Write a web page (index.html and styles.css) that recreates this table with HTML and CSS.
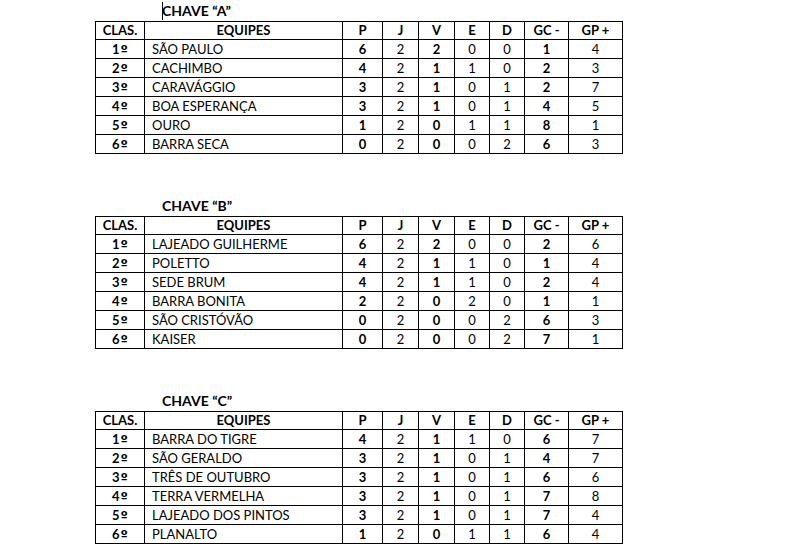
FILE: index.html
```html
<!DOCTYPE html>
<html lang="pt">
<head>
<meta charset="utf-8">
<title>Chaves</title>
<link rel="stylesheet" href="styles.css">
</head>
<body>
<main class="page">
  <section class="group">
    <h2 class="title"><span class="caret"></span>CHAVE “A”</h2>
    <table class="standings">
      <colgroup>
        <col class="c-clas"><col class="c-team"><col class="c-p"><col class="c-j"><col class="c-v"><col class="c-e"><col class="c-d"><col class="c-gc"><col class="c-gp">
      </colgroup>
      <thead>
        <tr><th>CLAS.</th><th>EQUIPES</th><th>P</th><th>J</th><th>V</th><th>E</th><th>D</th><th>GC -</th><th>GP +</th></tr>
      </thead>
      <tbody>
        <tr><td class="b">1<span class="ord">º</span></td><td class="team">SÃO PAULO</td><td class="b">6</td><td>2</td><td class="b">2</td><td>0</td><td>0</td><td class="b">1</td><td>4</td></tr>
        <tr><td class="b">2<span class="ord">º</span></td><td class="team">CACHIMBO</td><td class="b">4</td><td>2</td><td class="b">1</td><td>1</td><td>0</td><td class="b">2</td><td>3</td></tr>
        <tr><td class="b">3<span class="ord">º</span></td><td class="team">CARAVÁGGIO</td><td class="b">3</td><td>2</td><td class="b">1</td><td>0</td><td>1</td><td class="b">2</td><td>7</td></tr>
        <tr><td class="b">4<span class="ord">º</span></td><td class="team">BOA ESPERANÇA</td><td class="b">3</td><td>2</td><td class="b">1</td><td>0</td><td>1</td><td class="b">4</td><td>5</td></tr>
        <tr><td class="b">5<span class="ord">º</span></td><td class="team">OURO</td><td class="b">1</td><td>2</td><td class="b">0</td><td>1</td><td>1</td><td class="b">8</td><td>1</td></tr>
        <tr><td class="b">6<span class="ord">º</span></td><td class="team">BARRA SECA</td><td class="b">0</td><td>2</td><td class="b">0</td><td>0</td><td>2</td><td class="b">6</td><td>3</td></tr>
      </tbody>
    </table>
  </section>

  <section class="group">
    <h2 class="title">CHAVE “B”</h2>
    <table class="standings">
      <colgroup>
        <col class="c-clas"><col class="c-team"><col class="c-p"><col class="c-j"><col class="c-v"><col class="c-e"><col class="c-d"><col class="c-gc"><col class="c-gp">
      </colgroup>
      <thead>
        <tr><th>CLAS.</th><th>EQUIPES</th><th>P</th><th>J</th><th>V</th><th>E</th><th>D</th><th>GC -</th><th>GP +</th></tr>
      </thead>
      <tbody>
        <tr><td class="b">1<span class="ord">º</span></td><td class="team">LAJEADO GUILHERME</td><td class="b">6</td><td>2</td><td class="b">2</td><td>0</td><td>0</td><td class="b">2</td><td>6</td></tr>
        <tr><td class="b">2<span class="ord">º</span></td><td class="team">POLETTO</td><td class="b">4</td><td>2</td><td class="b">1</td><td>1</td><td>0</td><td class="b">1</td><td>4</td></tr>
        <tr><td class="b">3<span class="ord">º</span></td><td class="team">SEDE BRUM</td><td class="b">4</td><td>2</td><td class="b">1</td><td>1</td><td>0</td><td class="b">2</td><td>4</td></tr>
        <tr><td class="b">4<span class="ord">º</span></td><td class="team">BARRA BONITA</td><td class="b">2</td><td>2</td><td class="b">0</td><td>2</td><td>0</td><td class="b">1</td><td>1</td></tr>
        <tr><td class="b">5<span class="ord">º</span></td><td class="team">SÃO CRISTÓVÃO</td><td class="b">0</td><td>2</td><td class="b">0</td><td>0</td><td>2</td><td class="b">6</td><td>3</td></tr>
        <tr><td class="b">6<span class="ord">º</span></td><td class="team">KAISER</td><td class="b">0</td><td>2</td><td class="b">0</td><td>0</td><td>2</td><td class="b">7</td><td>1</td></tr>
      </tbody>
    </table>
  </section>

  <section class="group">
    <h2 class="title">CHAVE “C”</h2>
    <table class="standings">
      <colgroup>
        <col class="c-clas"><col class="c-team"><col class="c-p"><col class="c-j"><col class="c-v"><col class="c-e"><col class="c-d"><col class="c-gc"><col class="c-gp">
      </colgroup>
      <thead>
        <tr><th>CLAS.</th><th>EQUIPES</th><th>P</th><th>J</th><th>V</th><th>E</th><th>D</th><th>GC -</th><th>GP +</th></tr>
      </thead>
      <tbody>
        <tr><td class="b">1<span class="ord">º</span></td><td class="team">BARRA DO TIGRE</td><td class="b">4</td><td>2</td><td class="b">1</td><td>1</td><td>0</td><td class="b">6</td><td>7</td></tr>
        <tr><td class="b">2<span class="ord">º</span></td><td class="team">SÃO GERALDO</td><td class="b">3</td><td>2</td><td class="b">1</td><td>0</td><td>1</td><td class="b">4</td><td>7</td></tr>
        <tr><td class="b">3<span class="ord">º</span></td><td class="team">TRÊS DE OUTUBRO</td><td class="b">3</td><td>2</td><td class="b">1</td><td>0</td><td>1</td><td class="b">6</td><td>6</td></tr>
        <tr><td class="b">4<span class="ord">º</span></td><td class="team">TERRA VERMELHA</td><td class="b">3</td><td>2</td><td class="b">1</td><td>0</td><td>1</td><td class="b">7</td><td>8</td></tr>
        <tr><td class="b">5<span class="ord">º</span></td><td class="team">LAJEADO DOS PINTOS</td><td class="b">3</td><td>2</td><td class="b">1</td><td>0</td><td>1</td><td class="b">7</td><td>4</td></tr>
        <tr><td class="b">6<span class="ord">º</span></td><td class="team">PLANALTO</td><td class="b">1</td><td>2</td><td class="b">0</td><td>1</td><td>1</td><td class="b">6</td><td>4</td></tr>
      </tbody>
    </table>
  </section>
</main>
</body>
</html>
```
FILE: styles.css
```css
html, body {
  margin: 0;
  padding: 0;
  background: #ffffff;
}

body {
  font-family: Lato, "Open Sans", "Liberation Sans", sans-serif;
  color: #000000;
}

.page {
  display: flex;
  flex-direction: column;
  gap: 41px;
  padding: 0 0 0 95px;
}

.group {
  display: flex;
  flex-direction: column;
}

.title {
  position: relative;
  margin: 0;
  height: 21px;
  line-height: 22px;
  font-size: 14px;
  font-weight: 700;
  padding-left: 67px;
}

.caret {
  position: absolute;
  left: 67px;
  top: 2px;
  width: 1px;
  height: 18px;
  background: #000000;
}

.standings {
  border-collapse: collapse;
  table-layout: fixed;
  width: 528px;
  font-size: 13px;
}

.standings thead tr {
  height: 18px;
}

.standings tbody tr {
  height: 19px;
}

.standings th,
.standings td {
  border: 1px solid #000000;
  padding: 0;
  line-height: 15px;
  text-align: center;
  vertical-align: middle;
  font-weight: 400;
}

.standings th {
  font-weight: 700;
}

.standings td.b {
  font-weight: 700;
}

.standings td.team {
  text-align: left;
  padding-left: 7px;
}

.ord {
  font-family: "DejaVu Sans", "Liberation Sans", sans-serif;
  font-weight: 700;
  font-size: 13px;
  margin-left: 1px;
}

.c-clas { width: 49px; }
.c-team { width: 198px; }
.c-p { width: 40px; }
.c-j { width: 36px; }
.c-v { width: 36px; }
.c-e { width: 35px; }
.c-d { width: 35px; }
.c-gc { width: 44px; }
.c-gp { width: 54px; }
```
